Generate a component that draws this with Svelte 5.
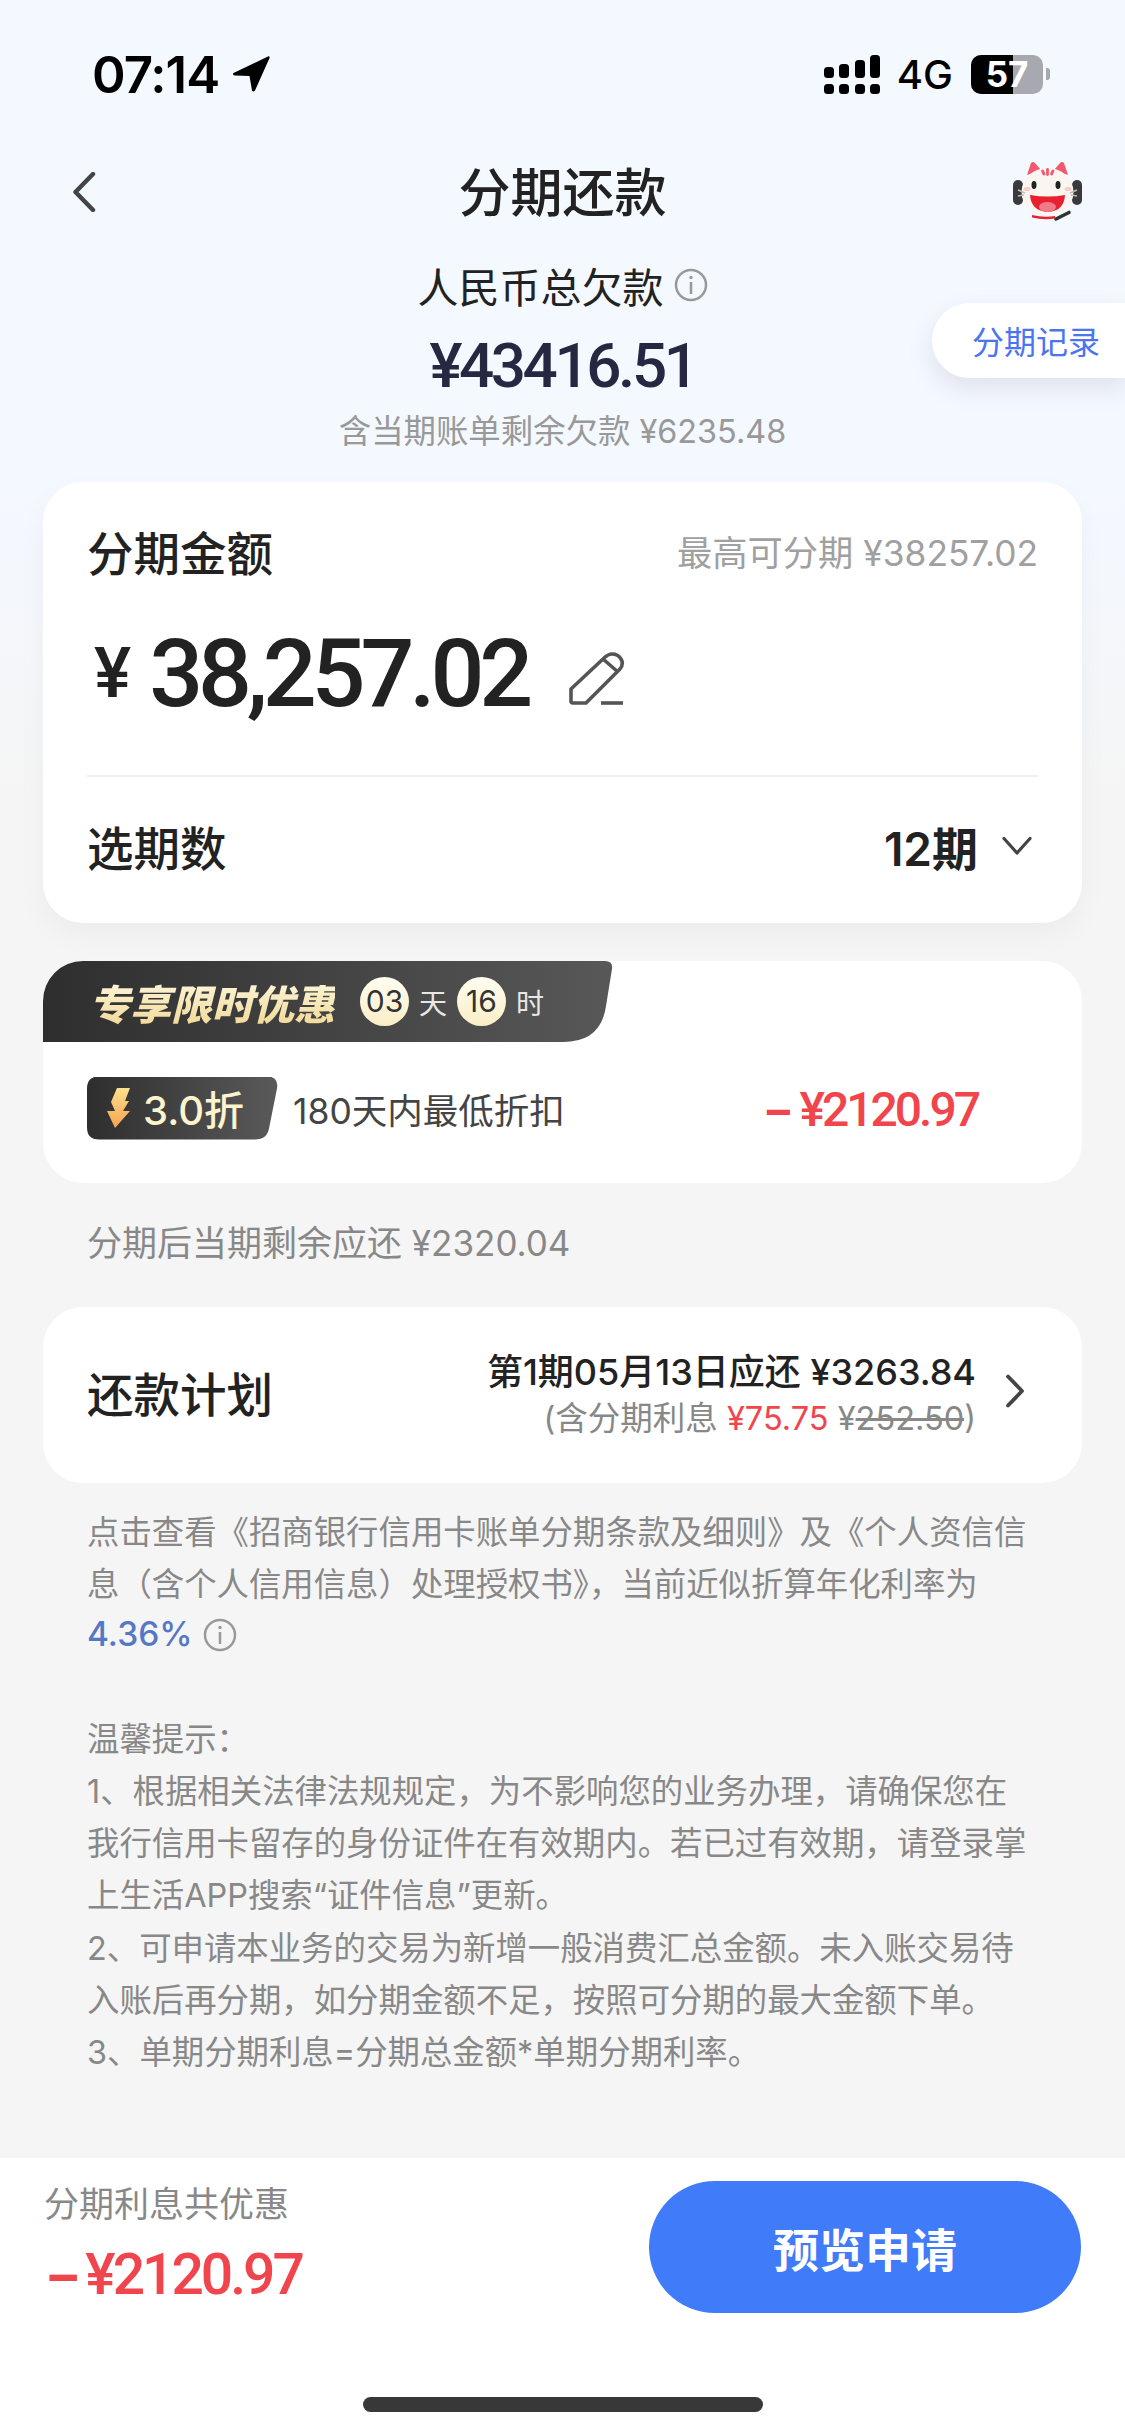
<script>
	const legal = [
		'点击查看《招商银行信用卡账单分期条款及细则》及《个人资信信',
		'息（含个人信用信息）处理授权书》，当前近似折算年化利率为'
	];
	const tips = [
		'温馨提示：',
		'1、根据相关法律法规规定，为不影响您的业务办理，请确保您在',
		'我行信用卡留存的身份证件在有效期内。若已过有效期，请登录掌',
		'上生活APP搜索“证件信息”更新。',
		'2、可申请本业务的交易为新增一般消费汇总金额。未入账交易待',
		'入账后再分期，如分期金额不足，按照可分期的最大金额下单。',
		'3、单期分期利息=分期总金额*单期分期利率。'
	];
</script>

<div class="page">
	<main class="content">
		<div class="status">
			<div class="status-left">
				<span class="time">07:14</span>
				<svg class="arrow" width="38" height="38" viewBox="0 0 38 38">
					<path d="M36 1.5 L1.5 18 Q0 20 3 20.5 L17.5 21 L20 35.5 Q21 37.5 23 35.5 L37.5 3 Q38 0.5 36 1.5Z" fill="#000" />
				</svg>
			</div>
			<div class="status-right">
				<svg width="56" height="39" viewBox="0 0 56 39">
					<g fill="#000">
						<rect x="0" y="12" width="10" height="11" rx="3.5" />
						<rect x="15" y="9" width="10" height="14" rx="3.5" />
						<rect x="31" y="5" width="10" height="18" rx="3.5" />
						<rect x="46" y="0" width="10" height="23" rx="3.5" />
						<rect x="0" y="29" width="10" height="10" rx="3.5" />
						<rect x="15" y="29" width="10" height="10" rx="3.5" />
						<rect x="31" y="29" width="10" height="10" rx="3.5" />
						<rect x="46" y="29" width="10" height="10" rx="3.5" />
					</g>
				</svg>
				<span class="net">4G</span>
				<div class="battery">
					<span class="level"></span>
					<span class="pct">57</span>
				</div>
				<span class="nub"></span>
			</div>
		</div>

		<header class="nav">
			<svg class="back" width="24" height="40" viewBox="0 0 24 40">
				<path d="M21 2 L3.5 20 L21 38" fill="none" stroke="#444" stroke-width="4.5" stroke-linecap="round" stroke-linejoin="round" />
			</svg>
			<h1>分期还款</h1>
			<svg class="mascot" width="70" height="60" viewBox="0 0 70 60">
				<rect x="1" y="18" width="10" height="25" rx="5" fill="#3a3a3a" />
				<rect x="60" y="18" width="10" height="25" rx="5" fill="#3a3a3a" />
				<path d="M15 13 L19 1 Q21 -1 23 1 L29 8 Z" fill="#f4586f" />
				<path d="M56 13 L52 1 Q50 -1 48 1 L42 8 Z" fill="#f4586f" />
				<ellipse cx="35.5" cy="30" rx="26" ry="24" fill="#fbf5ef" />
				<path d="M30.5 9 L32 12 M35.5 7.5 V12.5 M41 9 L39.5 12" stroke="#f4586f" stroke-width="2.8" stroke-linecap="round" />
				<ellipse cx="22" cy="23" rx="2.5" ry="4" fill="#222" />
				<ellipse cx="46" cy="23" rx="2.5" ry="4" fill="#222" />
				<ellipse cx="15" cy="27" rx="3.5" ry="2" fill="#fac8cd" />
				<ellipse cx="56" cy="27" rx="3.5" ry="2" fill="#fac8cd" />
				<path d="M6 28 L13 31 M6 34 L12 33 M65 28 L58 31 M65 34 L59 33" stroke="#bbb" stroke-width="1.6" />
				<path d="M18 33 Q36 36 53 33 Q52 49 36 50 Q19 49 18 33Z" fill="#e8202f" />
				<ellipse cx="35.5" cy="45" rx="8.5" ry="5" fill="#f07a88" />
				<path d="M20 53 Q32 56 43 54 V56.5 Q32 58.5 20 55.5Z" fill="#e8202f" />
				<path d="M44 57 L57 50.5" stroke="#333" stroke-width="3.6" stroke-linecap="round" />
			</svg>
		</header>

		<section class="summary">
			<div class="debt-label">
				<span>人民币总欠款</span>
				<svg class="info" width="34" height="34" viewBox="0 0 34 34">
					<circle cx="17" cy="17" r="15" fill="none" stroke="#999" stroke-width="2.5" />
					<path d="M17 14 V26" stroke="#999" stroke-width="2.5" />
					<circle cx="17" cy="9.5" r="1.7" fill="#999" />
				</svg>
			</div>
			<div class="debt-amount">¥43416.51</div>
			<div class="debt-sub">含当期账单剩余欠款 ¥6235.48</div>
			<div class="records">分期记录</div>
		</section>

		<section class="card amount-card">
			<div class="row head">
				<span class="card-title">分期金额</span>
				<span class="max">最高可分期 ¥38257.02</span>
			</div>
			<div class="amount">
				<span class="yen">¥</span>
				<span class="value">38,257.02</span>
				<svg class="edit" width="56" height="54" viewBox="11 11 56 54">
					<path d="M13 48 L45 18 Q50 13 54 13 Q60 13 63 18 Q66 23 62 28 L28 62 H15 Q13 62 13 60 Z" fill="none" stroke="#555" stroke-width="3.6" stroke-linejoin="round" />
					<path d="M45 18 L60 31" stroke="#555" stroke-width="3.6" />
					<path d="M43 62 H65" stroke="#555" stroke-width="3.6" />
				</svg>
			</div>
			<div class="row period">
				<span class="card-title">选期数</span>
				<div class="period-value">
					<span>12期</span>
					<svg width="30" height="20" viewBox="0 0 30 20">
						<path d="M2 2.5 L15 17 L28 2.5" fill="none" stroke="#444" stroke-width="3.2" stroke-linecap="round" stroke-linejoin="round" />
					</svg>
				</div>
			</div>
		</section>

		<section class="card promo">
			<div class="promo-head">
				<span class="promo-title">专享限时优惠</span>
				<span class="circle">03</span>
				<span class="unit">天</span>
				<span class="circle">16</span>
				<span class="unit">时</span>
			</div>
			<div class="promo-body">
				<div class="badge">
					<svg width="24" height="41" viewBox="0 0 24 41">
						<defs>
							<linearGradient id="bolt" x1="0" y1="0" x2="0" y2="1">
								<stop offset="0" stop-color="#fbe08f" />
								<stop offset="1" stop-color="#f6a34e" />
							</linearGradient>
						</defs>
						<path d="M10 0 H23 L18 13 H22 L16 23 H23 L8 40 L0 23 H8 L4 14 Z" fill="url(#bolt)" />
					</svg>
					<span>3.0折</span>
				</div>
				<span class="promo-text">180天内最低折扣</span>
				<span class="discount"><span class="minus">−</span>¥2120.97</span>
			</div>
		</section>

		<p class="note">分期后当期剩余应还 ¥2320.04</p>

		<section class="card plan">
			<span class="card-title">还款计划</span>
			<div class="plan-right">
				<div class="plan-info">
					<div class="plan-line">第1期05月13日应还 ¥3263.84</div>
					<div class="plan-sub">(含分期利息 <span class="red">¥75.75</span> ¥<s>252.50</s>)</div>
				</div>
				<svg class="plan-chevron" width="20" height="34" viewBox="0 0 20 34">
					<path d="M3 2.5 L17 17 L3 31.5" fill="none" stroke="#444" stroke-width="3.8" stroke-linecap="round" stroke-linejoin="round" />
				</svg>
			</div>
		</section>

		<div class="legal">
			{#each legal as line}
				<div>{line}</div>
			{/each}
			<div class="rate">
				<span>4.36%</span>
				<svg width="34" height="34" viewBox="0 0 34 34">
					<circle cx="17" cy="17" r="15" fill="none" stroke="#999" stroke-width="2.5" />
					<path d="M17 14 V26" stroke="#999" stroke-width="2.5" />
					<circle cx="17" cy="9.5" r="1.7" fill="#999" />
				</svg>
			</div>
		</div>

		<div class="legal tips">
			{#each tips as line}
				<div>{line}</div>
			{/each}
		</div>
	</main>

	<footer class="bar">
		<div class="bar-row">
			<div class="saving">
				<div class="saving-label">分期利息共优惠</div>
				<div class="saving-value"><span class="minus">−</span>¥2120.97</div>
			</div>
			<button class="submit">预览申请</button>
		</div>
		<div class="home"></div>
	</footer>
</div>

<style>
	:global(body) {
		margin: 0;
		font-family: Inter, 'Noto Sans CJK SC', sans-serif;
	}

	.page {
		width: 1125px;
		height: 2435px;
		display: flex;
		flex-direction: column;
		overflow: hidden;
		background: linear-gradient(#f4f8ff 0, #f4f8ff 500px, #f5f5f5 800px);
	}

	.content {
		flex: 1;
		min-height: 0;
	}

	.status {
		height: 148px;
		display: flex;
		justify-content: space-between;
		align-items: center;
		padding: 0 75px 0 92px;
		box-sizing: border-box;
	}

	.status-left {
		display: flex;
		align-items: center;
		gap: 13px;
	}

	.time {
		font-size: 51px;
		font-weight: 600;
		letter-spacing: -1px;
		color: #000;
	}

	.status-right {
		display: flex;
		align-items: center;
	}

	.net {
		font-size: 40px;
		font-weight: 500;
		color: #000;
		margin: 0 18px 0 17px;
	}

	.battery {
		width: 72px;
		height: 39px;
		border-radius: 10px;
		background: #a8a9b0;
		position: relative;
		display: flex;
		justify-content: center;
		align-items: center;
	}

	.level {
		position: absolute;
		left: 0;
		top: 0;
		bottom: 0;
		width: 42px;
		border-radius: 10px 0 0 10px;
		background: #000;
	}

	.pct {
		position: relative;
		color: #fff;
		font-size: 35px;
		font-weight: 700;
		line-height: 39px;
	}

	.nub {
		width: 4px;
		height: 12px;
		margin-left: 3px;
		background: #a8a9b0;
		border-radius: 0 3px 3px 0;
	}

	.nav {
		height: 88px;
		display: flex;
		align-items: center;
		justify-content: space-between;
		padding: 0 43px 0 72px;
		position: relative;
	}

	.nav h1 {
		position: absolute;
		left: 0;
		right: 0;
		margin: 0;
		padding-bottom: 6px;
		text-align: center;
		font-size: 52px;
		font-weight: 500;
		color: #222;
	}

	.mascot {
		position: relative;
	}

	.summary {
		position: relative;
		padding-top: 21px;
		height: 217px;
		box-sizing: border-box;
		text-align: center;
	}

	.debt-label {
		height: 56px;
		display: flex;
		justify-content: center;
		align-items: center;
		gap: 10px;
		font-size: 41px;
		color: #222;
	}

	.debt-amount {
		margin-top: 13px;
		line-height: 80px;
		font-family: Roboto, sans-serif;
		font-size: 62px;
		font-weight: 500;
		letter-spacing: -3.4px;
		color: #252840;
	}

	.debt-sub {
		margin-top: 3px;
		line-height: 46px;
		font-size: 32.4px;
		color: #999;
	}

	.records {
		position: absolute;
		right: 0;
		top: 67px;
		width: 193px;
		height: 75px;
		box-sizing: border-box;
		padding-left: 40px;
		line-height: 79px;
		text-align: left;
		font-size: 32px;
		color: #4a74f0;
		background: #fff;
		border-radius: 38px 0 0 38px;
		box-shadow: 0 10px 24px rgba(120, 130, 150, 0.18);
	}

	.card {
		margin: 0 43px;
		background: #fff;
		border-radius: 40px;
	}

	.card-title {
		font-size: 46.5px;
		font-weight: 500;
		color: #222;
	}

	.row {
		display: flex;
		justify-content: space-between;
		align-items: center;
	}

	.amount-card {
		margin-top: 29px;
		padding: 0 44px;
		box-shadow: 0 12px 30px rgba(0, 0, 0, 0.04);
	}

	.head {
		height: 146px;
		box-sizing: border-box;
		padding-bottom: 10px;
	}

	.max {
		font-size: 35.3px;
		color: #a0a0a0;
	}

	.amount {
		height: 149px;
		box-sizing: border-box;
		padding: 0 0 57px 7px;
		border-bottom: 2px solid #f0f0f0;
		display: flex;
		align-items: center;
		color: #222;
	}

	.yen {
		font-family: Roboto, sans-serif;
		font-size: 70px;
		font-weight: 500;
		margin-right: 18px;
	}

	.value {
		font-family: Roboto, sans-serif;
		font-size: 95px;
		font-weight: 500;
		letter-spacing: -5.2px;
	}

	.edit {
		margin: 12px 0 0 41px;
	}

	.period {
		height: 146px;
		box-sizing: border-box;
		padding-bottom: 9px;
	}

	.period-value {
		display: flex;
		align-items: center;
		gap: 24px;
		padding-right: 6px;
		font-size: 46px;
		font-weight: 600;
		color: #222;
	}

	.promo {
		margin-top: 38px;
		height: 222px;
	}

	.promo-head {
		width: 570px;
		height: 81px;
		box-sizing: border-box;
		padding-left: 46px;
		display: flex;
		align-items: center;
		background: linear-gradient(90deg, #2e2e2e, #585858);
		clip-path: path('M0 81 V40 A40 40 0 0 1 40 0 H562 Q570 0 569 8 L563 45 Q558 81 520 81 Z');
	}

	.promo-title {
		font-size: 41px;
		font-weight: 900;
		font-style: italic;
		white-space: nowrap;
		background: linear-gradient(#fffbe6, #f0d68f);
		-webkit-background-clip: text;
		background-clip: text;
		color: transparent;
		margin-right: 25px;
	}

	.circle {
		width: 49px;
		height: 49px;
		flex: none;
		border-radius: 50%;
		background: linear-gradient(#fffdf2, #fbeec6);
		color: #333;
		font-size: 30px;
		line-height: 49px;
		text-align: center;
	}

	.unit {
		width: 48px;
		text-align: center;
		font-size: 28px;
		color: #e8e8e8;
	}

	.promo-body {
		height: 141px;
		box-sizing: border-box;
		padding: 35px 0 44px 44px;
		display: flex;
		align-items: center;
	}

	.badge {
		width: 191px;
		height: 63px;
		flex: none;
		box-sizing: border-box;
		padding-left: 20px;
		display: flex;
		align-items: center;
		gap: 12px;
		font-size: 40px;
		font-weight: 500;
		color: #fdf3cf;
		background: linear-gradient(90deg, #2e2e2e, #5a5a5a);
		clip-path: path('M12 0 H180 Q192 0 190 12 L182 52 Q180 63 168 63 H12 Q0 63 0 51 V12 Q0 0 12 0Z');
	}

	.promo-text {
		margin-left: 15px;
		font-size: 35.5px;
		color: #444;
	}

	.discount {
		margin-left: auto;
		margin-right: 104px;
		font-family: Roboto, sans-serif;
		font-size: 48px;
		font-weight: 500;
		letter-spacing: -3px;
		color: #f0454c;
	}

	.minus {
		font-family: Inter, sans-serif;
		font-weight: 600;
	}

	.discount .minus {
		margin-right: 8px;
	}

	.note {
		margin: 37px 87px 0;
		line-height: 46px;
		font-size: 35px;
		color: #888;
	}

	.plan {
		margin-top: 41px;
		height: 176px;
		box-sizing: border-box;
		padding: 0 57px 0 44px;
		display: flex;
		justify-content: space-between;
		align-items: center;
	}

	.plan .card-title {
		margin-bottom: 8px;
	}

	.plan-chevron {
		margin-bottom: 8px;
	}

	.plan-right {
		display: flex;
		align-items: center;
		gap: 29px;
	}

	.plan-info {
		text-align: right;
	}

	.plan-line {
		font-size: 36px;
		font-weight: 500;
		color: #222;
		line-height: 48px;
	}

	.plan-sub {
		font-size: 32.5px;
		color: #888;
		line-height: 46px;
	}

	.red {
		color: #f0454c;
	}

	.legal {
		margin: 24px 87px 0;
		font-size: 32.4px;
		line-height: 52.3px;
		color: #888;
		white-space: nowrap;
	}

	.rate {
		display: flex;
		align-items: center;
		gap: 10px;
		height: 52px;
		box-sizing: border-box;
		padding-bottom: 6px;
		font-size: 33.5px;
		color: #5578c4;
		font-weight: 500;
	}

	.tips {
		margin-top: 50px;
	}

	.bar {
		height: 277px;
		flex: none;
		background: #fff;
		position: relative;
	}

	.bar-row {
		display: flex;
		justify-content: space-between;
		padding: 23px 44px 0;
	}

	.saving-label {
		line-height: 46px;
		font-size: 35px;
		color: #888;
	}

	.saving-value {
		margin-top: 14px;
		line-height: 66px;
		font-family: Roboto, sans-serif;
		font-size: 57px;
		font-weight: 500;
		letter-spacing: -3px;
		color: #f0454c;
	}

	.saving-value .minus {
		margin-right: 6px;
	}

	.submit {
		width: 432px;
		height: 132px;
		border: 0;
		border-radius: 66px;
		background: #407bf9;
		color: #fff;
		font-family: inherit;
		font-size: 46px;
		font-weight: 700;
	}

	.home {
		position: absolute;
		left: 363px;
		top: 239px;
		width: 400px;
		height: 15px;
		border-radius: 8px;
		background: #383838;
	}
</style>
